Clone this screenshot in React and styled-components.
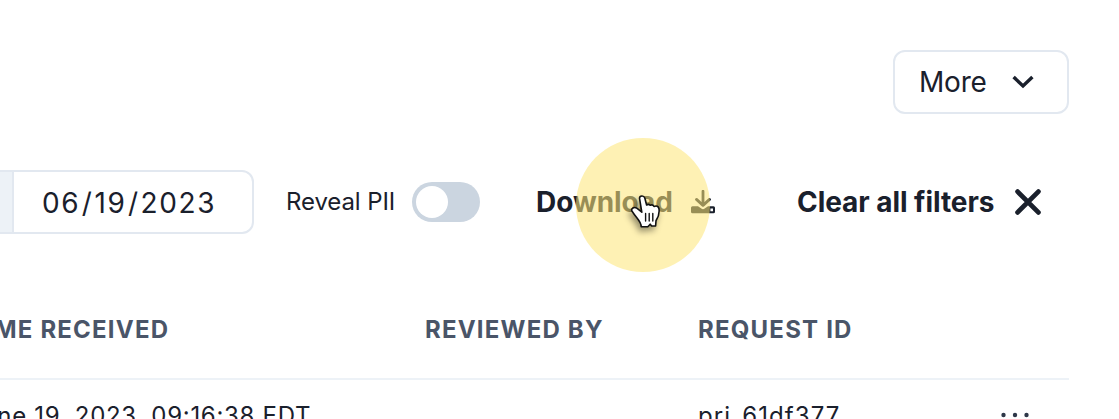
import React from "react";
import styled, { createGlobalStyle } from "styled-components";

const GlobalStyle = createGlobalStyle`
  *, *::before, *::after { box-sizing: border-box; }
  body { margin: 0; background: #fff; overflow: hidden; }
`;

const Page = styled.main`
  position: relative;
  width: 1119px;
  height: 419px;
  padding: 50px 50px 0 0;
  overflow: hidden;
  color: #1a202c;
  font-family: Inter, "Liberation Sans", sans-serif;
  font-weight: 400;
  white-space: nowrap;
`;

const TopBar = styled.header`
  display: flex;
  justify-content: flex-end;
`;

const OutlineButton = styled.button`
  display: flex;
  align-items: center;
  justify-content: space-between;
  width: 176px;
  height: 64px;
  padding: 0 33px 0 24px;
  border: 2px solid #e2e8f0;
  border-radius: 12px;
  background: #fff;
  color: inherit;
  font: 400 28px/1 Inter, sans-serif;
  letter-spacing: -0.2px;
`;

const Toolbar = styled.div`
  display: flex;
  align-items: center;
  height: 64px;
  margin-top: 56px;
`;

const DateGroup = styled.div`
  display: flex;
  width: 254px;
  height: 64px;
`;

const Addon = styled.div`
  width: 12px;
  background: #edf2f7;
  border: solid #e2e8f0;
  border-width: 2px 0;
`;

const DateField = styled.div`
  display: flex;
  align-items: center;
  flex: 1;
  padding: 2px 0 0 28px;
  border: 2px solid #e2e8f0;
  border-radius: 0 12px 12px 0;
  font-size: 28px;
  letter-spacing: 1.6px;
`;

const Slash = styled.span`
  padding: 0 1px 0 1.5px;
`;

const ToggleLabel = styled.label`
  width: 126px;
  margin-left: 32px;
  font-size: 24px;
  line-height: 36px;
  letter-spacing: -0.1px;
`;

const Switch = styled.span`
  width: 68px;
  height: 40px;
  padding: 4px;
  border-radius: 20px;
  background: #cbd5e0;
`;

const Thumb = styled.span`
  display: block;
  width: 32px;
  height: 32px;
  border-radius: 50%;
  background: #fff;
`;

const TextButton = styled.button`
  display: flex;
  align-items: center;
  justify-content: space-between;
  width: ${(p) => p.$width}px;
  margin-left: ${(p) => p.$gap}px;
  padding: 0;
  border: 0;
  background: none;
  color: inherit;
  font: 700 28px/34px Inter, sans-serif;
  letter-spacing: -0.05px;
`;

const Grid = styled.div`
  display: grid;
  grid-template-columns: 425px 273px 303px 1fr;
`;

const HeadRow = styled(Grid)`
  height: 90px;
  margin-top: 56px;
  padding-top: 24px;
  border-bottom: 2px solid #edf2f7;
  color: #4a5568;
  font-size: 24px;
  font-weight: 700;
  line-height: 32px;
  letter-spacing: 1.2px;
`;

const BodyRow = styled(Grid)`
  padding-top: 20px;
  font-size: 24px;
  line-height: 32px;
`;

const Cell = styled.div`
  margin-left: ${(p) => p.$shift || 0}px;
  letter-spacing: ${(p) => p.$tracking}px;
`;

const Menu = styled.div`
  display: flex;
  padding-top: 12px;
`;

const Highlight = styled.div`
  position: absolute;
  left: 576px;
  top: 138px;
  width: 134px;
  height: 134px;
  border-radius: 50%;
  background: rgba(253, 230, 120, 0.555);
`;

const Pointer = styled.svg`
  position: absolute;
  left: 628px;
  top: 191px;
  filter: drop-shadow(-2px 4px 3px rgba(0, 0, 0, 0.4));
`;

const Chevron = () => (
  <svg width="22" height="14" viewBox="0 0 22 14" fill="none" stroke="currentColor" strokeWidth="3.4">
    <path d="M1.6 2 11 11 20.4 2" />
  </svg>
);

const DownloadIcon = () => (
  <svg width="24" height="24" viewBox="0 0 24 24" fill="none">
    <path d="M12 1.2V14M5.5 9.4 12 15.4 18.5 9.4" stroke="currentColor" strokeWidth="2.8" strokeLinecap="round" strokeLinejoin="round" />
    <path fillRule="evenodd" fill="currentColor" d="M1.5 16.3H7L10.3 18.6Q12 19.8 13.7 18.6L17 16.3H22.5Q24 16.3 24 17.8V21.8Q24 23.3 22.5 23.3H1.5Q0 23.3 0 21.8V17.8Q0 16.3 1.5 16.3ZM19.4 18.4V21.2H22V18.4Z" />
  </svg>
);

const CloseIcon = () => (
  <svg width="26" height="26" viewBox="0 0 26 26" fill="none" stroke="currentColor" strokeWidth="4.8" strokeLinecap="round">
    <path d="M2.6 2.6 23.4 23.4M23.4 2.6 2.6 23.4" />
  </svg>
);

const Dots = () => (
  <svg width="28" height="6" viewBox="0 0 28 6" fill="#2d3748">
    <circle cx="2.5" cy="3" r="2.2" />
    <circle cx="14" cy="3" r="2.2" />
    <circle cx="25.5" cy="3" r="2.2" />
  </svg>
);

const HandPointer = () => (
  <Pointer width="36" height="38" viewBox="0 0 36 38">
    <path
      d="M11.5 7.2C11.6 4.5 15.8 4.2 16.8 7L18.6 14Q20.6 12.5 22.2 14.3Q24.8 13.2 26 15.5Q30 14 31 17.8C31.8 23.5 29.8 27 28 29.8L27.6 35H23.6L22.2 33.2 19.8 35.7H13.2C13.2 31 9 27.3 6.5 23.8L3.9 20C2.8 17.4 6.1 15.4 8.8 17.2L13.8 21.2Z"
      fill="#fff"
      stroke="#111"
      strokeWidth="1.6"
      strokeLinejoin="round"
    />
    <path d="M17.6 22.5V30M21.2 22.5V30M24.8 22.5V30" stroke="#111" strokeWidth="1.4" strokeLinecap="round" />
  </Pointer>
);

export default function App() {
  return (
    <>
      <GlobalStyle />
      <Page>
        <TopBar>
          <OutlineButton>More<Chevron /></OutlineButton>
        </TopBar>
        <Toolbar>
          <DateGroup>
            <Addon />
            <DateField>
              <span>06</span><Slash>/</Slash><span>19</span><Slash>/</Slash><span>2023</span>
            </DateField>
          </DateGroup>
          <ToggleLabel>Reveal PII</ToggleLabel>
          <Switch><Thumb /></Switch>
          <TextButton $width={179} $gap={56}>Download<DownloadIcon /></TextButton>
          <TextButton $width={244} $gap={82}>Clear all filters<CloseIcon /></TextButton>
        </Toolbar>
        <HeadRow>
          <Cell $shift={-31}>TIME RECEIVED</Cell>
          <Cell>REVIEWED BY</Cell>
          <Cell>REQUEST ID</Cell>
        </HeadRow>
        <BodyRow>
          <Cell $shift={-32} $tracking={0.7}>June 19, 2023, 09:16:38 EDT</Cell>
          <Cell />
          <Cell $tracking={1.1}>pri_61df377</Cell>
          <Menu><Dots /></Menu>
        </BodyRow>
        <Highlight />
        <HandPointer />
      </Page>
    </>
  );
}
